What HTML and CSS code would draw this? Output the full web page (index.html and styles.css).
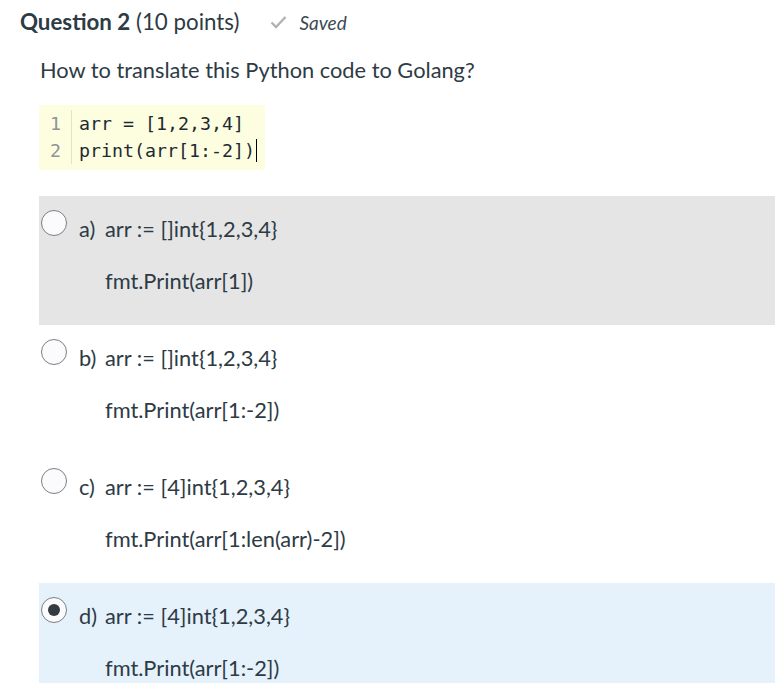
FILE: index.html
```html
<!DOCTYPE html>
<html>
<head>
<meta charset="utf-8">
<link rel="stylesheet" href="styles.css">
</head>
<body>
<div class="page">
  <div class="qheader">
    <h2 class="qtitle"><span class="qnum">Question 2</span> <span class="qpts">(10 points)</span></h2>
    <div class="saved">
      <svg class="check" width="17" height="14" viewBox="0 0 17 14"><path d="M1.5 7.5 L6 12 L15.5 2" fill="none" stroke="#b0b3b6" stroke-width="2.4"/></svg>
      <span>Saved</span>
    </div>
  </div>
  <p class="qtext">How to translate this Python code to Golang?</p>
  <div class="code">
    <div class="gutter"><div>1</div><div>2</div></div>
    <div class="lines"><div>arr = [1,2,3,4]</div><div>print(arr[1:-2])<span class="caret"></span></div></div>
  </div>
  <div class="options">
    <div class="option hover">
      <span class="radio"></span>
      <div class="otext"><div class="l1"><span class="lbl">a)</span>arr := []int{1,2,3,4}</div><div class="l2">fmt.Print(arr[1])</div></div>
    </div>
    <div class="option">
      <span class="radio"></span>
      <div class="otext"><div class="l1"><span class="lbl">b)</span>arr := []int{1,2,3,4}</div><div class="l2">fmt.Print(arr[1:-2])</div></div>
    </div>
    <div class="option">
      <span class="radio"></span>
      <div class="otext"><div class="l1"><span class="lbl">c)</span>arr := [4]int{1,2,3,4}</div><div class="l2">fmt.Print(arr[1:len(arr)-2])</div></div>
    </div>
    <div class="option selected">
      <span class="radio checked"></span>
      <div class="otext"><div class="l1"><span class="lbl">d)</span>arr := [4]int{1,2,3,4}</div><div class="l2">fmt.Print(arr[1:-2])</div></div>
    </div>
  </div>
</div>
</body>
</html>
```
FILE: styles.css
```css
html, body { margin: 0; padding: 0; background: #fff; }
body { font-family: Lato, "Open Sans", sans-serif; color: #2d3b45; overflow: hidden; height: 683px; }
.page { padding: 8px 0 0 20px; }
.qheader { display: flex; align-items: center; height: 28px; }
.qtitle { margin: 0; font-size: 22.3px; font-weight: normal; line-height: 28px; }
.qnum { font-weight: bold; }
.saved { display: flex; align-items: center; margin-left: 31px; font-style: italic; font-size: 19px; color: #3d4a54; }
.check { margin-right: 12px; }
.qtext { margin: 21px 0 0 20px; font-size: 21.8px; line-height: 26px; }
.code { display: inline-flex; margin: 22px 0 0 19px; background: #fdfde0; padding: 5px 8px 6px 0; font-family: "DejaVu Sans Mono", monospace; font-size: 18.3px; line-height: 27px; }
.gutter { color: #8e9499; text-align: right; width: 22px; padding-right: 10px; border-right: 1px solid #e2e2cc; }
.lines { padding-left: 7px; color: #1d2a33; }
.caret { display: inline-block; width: 1px; height: 23px; background: #000; vertical-align: -5px; margin-left: 1px; }
.options { margin: 26px 0 0 19px; }
.option { display: flex; height: 129px; padding-left: 2px; }
.option.hover { background: #e5e5e5; }
.option.selected { background: #e5f1fb; }
.radio { width: 24px; height: 24px; border: 1.5px solid #7b7f83; border-radius: 50%; background: #fbfbfd; margin-top: 14px; flex: none; position: relative; box-sizing: content-box; }
.radio.checked::after { content: ""; position: absolute; left: 6px; top: 6px; width: 12px; height: 12px; border-radius: 50%; background: #333a40; }
.otext { margin-left: 12px; font-size: 21.8px; padding-top: 21px; }
.l1 { line-height: 24px; }
.lbl { display: inline-block; width: 26px; }
.l2 { line-height: 24px; margin-top: 28px; padding-left: 26px; }
```
